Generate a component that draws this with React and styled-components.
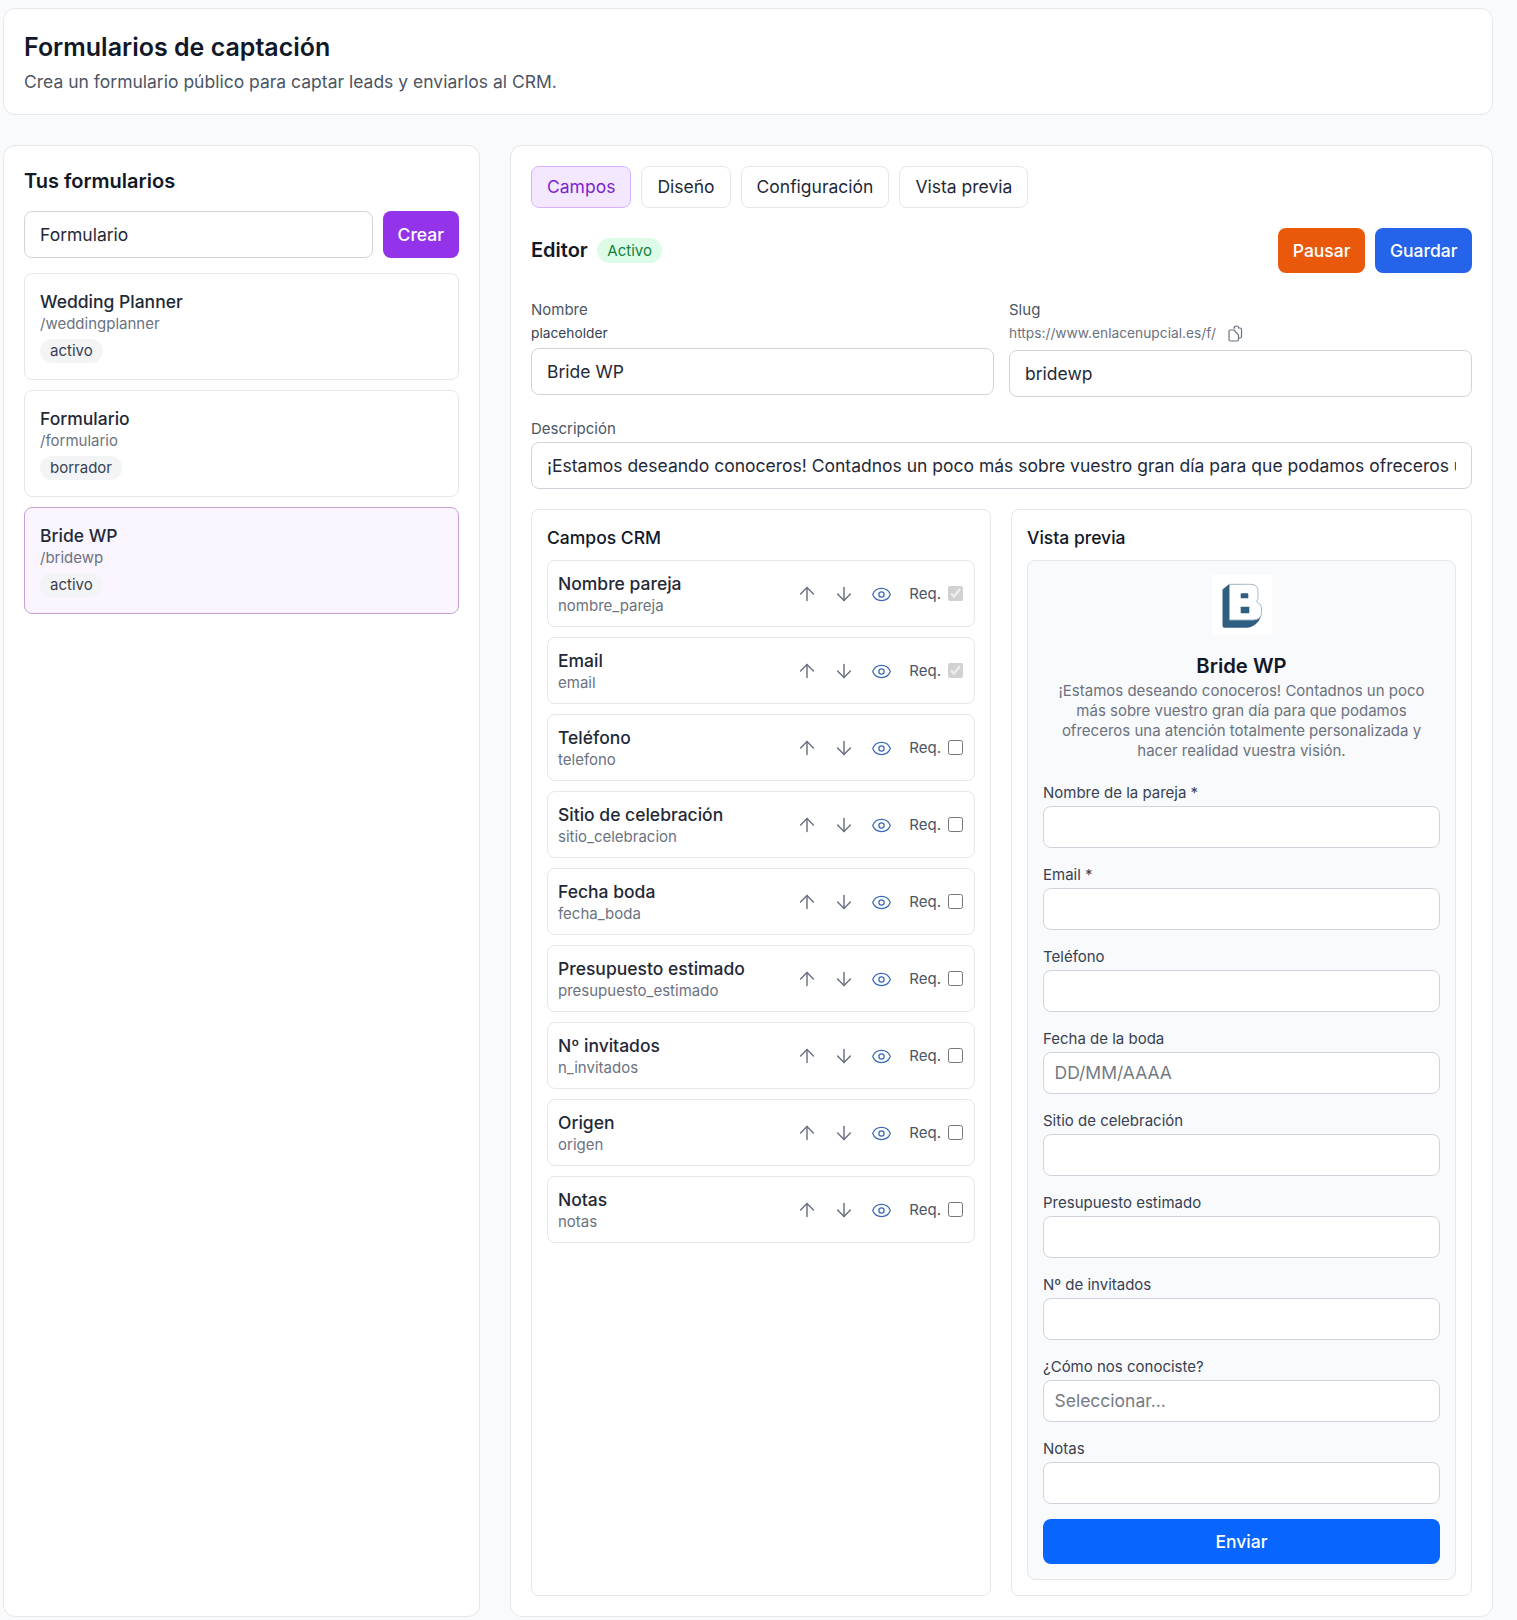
import styled, { createGlobalStyle } from "styled-components";
import { ArrowDown, ArrowUp, Eye } from "lucide-react";

const GlobalStyle = createGlobalStyle`
    * {
        box-sizing: border-box;
    }
    body {
        margin: 0;
        background: #f9fafb;
        color: #111827;
        font-family: Inter, "Liberation Sans", sans-serif;
    }
`;

const Page = styled.div`
    width: 1517px;
    height: 1620px;
    padding: 8px 24px 3px 3px;
    display: flex;
    flex-direction: column;
    gap: 30px;
`;

const Card = styled.section`
    background: #fff;
    border: 1px solid #e5e7eb;
    border-radius: 12px;
`;

const Header = styled(Card)`
    height: 107px;
    padding: 24px 20px 0;
`;

const PageTitle = styled.h1`
    margin: 0;
    font-size: 25px;
    line-height: 28px;
    font-weight: 600;
`;

const PageSub = styled.p`
    margin: 9px 0 0;
    font-size: 17.5px;
    line-height: 24px;
    color: #4b5563;
`;

const Columns = styled.div`
    flex: 1;
    display: grid;
    grid-template-columns: 477px 983px;
    gap: 30px;
    min-height: 0;
`;

const Sidebar = styled(Card)`
    padding: 20px;
`;

const SideTitle = styled.h2`
    margin: 0 0 15px;
    font-size: 20px;
    line-height: 30px;
    font-weight: 600;
`;

const CreateRow = styled.div`
    display: flex;
    gap: 10px;
    margin-bottom: 15px;
`;

const TextInput = styled.input`
    display: block;
    width: 100%;
    min-width: 0;
    height: ${(p) => p.$h || 47}px;
    padding: 0 ${(p) => p.$pad || 15}px;
    background: #fff;
    border: 1px solid #d1d5db;
    border-radius: 8px;
    color: #1f2937;
    font-family: inherit;
    font-size: 17.5px;
    outline: none;

    &::placeholder {
        color: #757b85;
    }
`;

const Button = styled.button`
    flex: none;
    height: ${(p) => p.$h || 45}px;
    padding: 0 ${(p) => p.$px || 14.5}px;
    border: 0;
    border-radius: 8px;
    background: ${(p) => p.$bg};
    color: #fff;
    font-family: inherit;
    font-size: 17.5px;
    font-weight: 500;
`;

const FormList = styled.div`
    display: flex;
    flex-direction: column;
    gap: 10px;
`;

const FormItem = styled.div`
    height: 107px;
    padding: 16px 15px 0;
    border: 1px solid ${(p) => (p.$active ? "#c79fd8" : "#e5e7eb")};
    border-radius: 8px;
    background: ${(p) => (p.$active ? "#faf5ff" : "#fff")};
`;

const FormName = styled.div`
    font-size: 17.5px;
    line-height: 24px;
    font-weight: 500;
    color: #1f2937;
`;

const FormSlug = styled.div`
    font-size: 15px;
    line-height: 20px;
    color: #6b7280;
`;

const Chip = styled.span`
    display: inline-block;
    margin-top: 5px;
    padding: 0 10px;
    height: 24px;
    line-height: 24px;
    border-radius: 12px;
    background: #f3f4f6;
    color: #374151;
    font-size: 15px;
`;

const Editor = styled(Card)`
    padding: 20px;
    display: flex;
    flex-direction: column;
`;

const Tabs = styled.div`
    display: flex;
    gap: 10px;
`;

const Tab = styled.button`
    height: 42px;
    padding: 0 15px 1px;
    border: 1px solid ${(p) => (p.$active ? "#d8b4fe" : "#e5e7eb")};
    border-radius: 8px;
    background: ${(p) => (p.$active ? "#f3e8ff" : "#fff")};
    color: ${(p) => (p.$active ? "#7e22ce" : "#1f2937")};
    font-family: inherit;
    font-size: 17.5px;
`;

const EditorBar = styled.div`
    display: flex;
    align-items: flex-start;
    justify-content: space-between;
    margin-top: 20px;
    height: 45px;
`;

const EditorName = styled.div`
    display: flex;
    align-items: center;
    gap: 9.5px;
    height: 44px;
`;

const EditorTitle = styled.h2`
    margin: 0;
    font-size: 20px;
    font-weight: 600;
`;

const StatusBadge = styled.span`
    height: 25px;
    line-height: 25px;
    padding: 0 10px;
    border-radius: 13px;
    background: #dcfce7;
    color: #15803d;
    font-size: 15px;
`;

const Actions = styled.div`
    display: flex;
    gap: 10px;
`;

const NameGrid = styled.div`
    display: grid;
    grid-template-columns: 463px 463px;
    gap: 15px;
    margin-top: 26px;
`;

const FieldLabel = styled.div`
    font-size: 15px;
    line-height: ${(p) => p.$lh || 22}px;
    color: #4b5563;
`;

const SubLabel = styled.div`
    display: flex;
    align-items: flex-start;
    gap: 12px;
    height: ${(p) => p.$h}px;
    font-size: 13.75px;
    line-height: 24px;
    color: ${(p) => p.$color};
`;

const CopyIcon = styled.svg`
    margin-top: 4px;
    color: #6b7280;
`;

const DescField = styled.div`
    margin-top: 19px;
`;

const Panels = styled.div`
    flex: 1;
    display: grid;
    grid-template-columns: 460px 461px;
    gap: 20px;
    margin-top: 20px;
`;

const Panel = styled.div`
    border: 1px solid #e5e7eb;
    border-radius: 8px;
    padding: 15px;
    display: flex;
    flex-direction: column;
`;

const PanelTitle = styled.h3`
    margin: 0 0 10px;
    height: 25px;
    font-size: 17.5px;
    line-height: 25px;
    font-weight: 500;
`;

const FieldList = styled.div`
    display: flex;
    flex-direction: column;
    gap: 10.3px;
`;

const FieldRow = styled.div`
    height: 66.7px;
    padding: 2px 11px 0 10px;
    display: flex;
    align-items: center;
    justify-content: space-between;
    border: 1px solid #e5e7eb;
    border-radius: 8px;
`;

const FieldName = styled.div`
    font-size: 17.5px;
    line-height: 24px;
    font-weight: 500;
    color: #1f2937;
`;

const FieldKey = styled.div`
    font-size: 15px;
    line-height: 20px;
    color: #6b7280;
`;

const RowTools = styled.div`
    display: flex;
    align-items: center;
    height: 22px;
`;

const IconSlot = styled.span`
    display: flex;
    justify-content: center;
    width: 37.5px;
    color: ${(p) => p.$color || "#6b7280"};
`;

const ReqLabel = styled.label`
    display: flex;
    align-items: center;
    gap: 7px;
    margin: -2px 0 0 9px;
    font-size: 15px;
    color: #4b5563;
`;

const ReqBox = styled.input`
    width: 15px;
    height: 15px;
    margin: 0;
`;

const PreviewBox = styled.div`
    flex: 1;
    padding: 14px 15px;
    border: 1px solid #e5e7eb;
    border-radius: 8px;
    background: #f9fafb;
`;

const LogoBox = styled.div`
    width: 60px;
    height: 60px;
    margin: 0 auto;
    background: #fff;
`;

const PreviewTitle = styled.h4`
    margin: 16px 0 0;
    text-align: center;
    font-size: 20.25px;
    line-height: 30px;
    font-weight: 600;
`;

const PreviewText = styled.p`
    margin: 0 auto 18px;
    width: 375px;
    text-align: center;
    font-size: 15px;
    line-height: 20px;
    color: #6b7280;
`;

const PreviewField = styled.div`
    margin-bottom: 13.5px;
`;

const PreviewLabel = styled.div`
    font-size: 15px;
    line-height: 27px;
    color: #374151;
`;

const SendButton = styled(Button)`
    display: block;
    width: 100%;
    margin-top: 15px;
`;

const forms = [
    { name: "Wedding Planner", slug: "/weddingplanner", status: "activo" },
    { name: "Formulario", slug: "/formulario", status: "borrador" },
    { name: "Bride WP", slug: "/bridewp", status: "activo", active: true },
];

const tabs = ["Campos", "Diseño", "Configuración", "Vista previa"];

const crmFields = [
    { name: "Nombre pareja", key: "nombre_pareja", locked: true },
    { name: "Email", key: "email", locked: true },
    { name: "Teléfono", key: "telefono" },
    { name: "Sitio de celebración", key: "sitio_celebracion" },
    { name: "Fecha boda", key: "fecha_boda" },
    { name: "Presupuesto estimado", key: "presupuesto_estimado" },
    { name: "Nº invitados", key: "n_invitados" },
    { name: "Origen", key: "origen" },
    { name: "Notas", key: "notas" },
];

const previewFields = [
    { label: "Nombre de la pareja *" },
    { label: "Email *" },
    { label: "Teléfono" },
    { label: "Fecha de la boda", placeholder: "DD/MM/AAAA" },
    { label: "Sitio de celebración" },
    { label: "Presupuesto estimado" },
    { label: "Nº de invitados" },
    { label: "¿Cómo nos conociste?", placeholder: "Seleccionar..." },
    { label: "Notas" },
];

const description =
    "¡Estamos deseando conoceros! Contadnos un poco más sobre vuestro gran día para que podamos ofreceros una atención totalmente personalizada y hacer realidad vuestra visión.";

function BrideLogo() {
    return (
        <svg width="60" height="60" viewBox="0 0 60 60">
            <path
                d="M10.5 14.5 L17 9.3 H30 V44 H41 Q46 44 49.5 39 Q48 47 41 51 Q38 52.7 35 52.7 H12.5 Q10.5 52.7 10.5 50.5 Z"
                fill="#2f5f80"
            />
            <path
                d="M17.5 9.3 H39 Q46 9.3 46 17 V22 Q46 25 44.5 26.5 Q49.5 29 49.5 33 V37 Q49.5 45 41 45 H17.5 Z"
                fill="#fff"
                stroke="#9fb2c0"
                strokeWidth="0.9"
            />
            <rect x="28.7" y="18.3" width="7.6" height="5" rx="0.6" fill="#2f5f80" />
            <rect x="28.7" y="31.7" width="8.6" height="6.6" rx="0.6" fill="#2f5f80" />
        </svg>
    );
}

function SlugCopy() {
    return (
        <CopyIcon width="15" height="17" viewBox="0 0 15 17" fill="none" stroke="currentColor" strokeWidth="1.2">
            <path d="M5 3 H6.5 V2 Q6.5 1 8.5 1 Q10.5 1 10.5 2 V3 H12 Q13.5 3 13.5 4.5 V11.5 Q13.5 13 12 13 H10.5" />
            <path d="M1 6.5 Q1 5 2.5 5 H6 L10.5 10 V14.5 Q10.5 16 9 16 H2.5 Q1 16 1 14.5 Z" />
        </CopyIcon>
    );
}

export default function App() {
    return (
        <Page>
            <GlobalStyle />
            <Header>
                <PageTitle>Formularios de captación</PageTitle>
                <PageSub>Crea un formulario público para captar leads y enviarlos al CRM.</PageSub>
            </Header>

            <Columns>
                <Sidebar>
                    <SideTitle>Tus formularios</SideTitle>
                    <CreateRow>
                        <TextInput defaultValue="Formulario" />
                        <Button $bg="#9333ea" $h={47} $px={15}>
                            Crear
                        </Button>
                    </CreateRow>
                    <FormList>
                        {forms.map((form) => (
                            <FormItem key={form.slug} $active={form.active}>
                                <FormName>{form.name}</FormName>
                                <FormSlug>{form.slug}</FormSlug>
                                <Chip>{form.status}</Chip>
                            </FormItem>
                        ))}
                    </FormList>
                </Sidebar>

                <Editor>
                    <Tabs>
                        {tabs.map((tab, index) => (
                            <Tab key={tab} $active={index === 0}>
                                {tab}
                            </Tab>
                        ))}
                    </Tabs>

                    <EditorBar>
                        <EditorName>
                            <EditorTitle>Editor</EditorTitle>
                            <StatusBadge>Activo</StatusBadge>
                        </EditorName>
                        <Actions>
                            <Button $bg="#ea580c" $px={15}>
                                Pausar
                            </Button>
                            <Button $bg="#2563eb">Guardar</Button>
                        </Actions>
                    </EditorBar>

                    <NameGrid>
                        <div>
                            <FieldLabel>Nombre</FieldLabel>
                            <SubLabel $h={27} $color="#374151">
                                placeholder
                            </SubLabel>
                            <TextInput defaultValue="Bride WP" />
                        </div>
                        <div>
                            <FieldLabel>Slug</FieldLabel>
                            <SubLabel $h={29} $color="#6b7280">
                                https://www.enlacenupcial.es/f/
                                <SlugCopy />
                            </SubLabel>
                            <TextInput defaultValue="bridewp" />
                        </div>
                    </NameGrid>

                    <DescField>
                        <FieldLabel $lh={26}>Descripción</FieldLabel>
                        <TextInput defaultValue={description} />
                    </DescField>

                    <Panels>
                        <Panel>
                            <PanelTitle>Campos CRM</PanelTitle>
                            <FieldList>
                                {crmFields.map((field) => (
                                    <FieldRow key={field.key}>
                                        <div>
                                            <FieldName>{field.name}</FieldName>
                                            <FieldKey>{field.key}</FieldKey>
                                        </div>
                                        <RowTools>
                                            <IconSlot>
                                                <ArrowUp size={22} strokeWidth={1.6} />
                                            </IconSlot>
                                            <IconSlot>
                                                <ArrowDown size={22} strokeWidth={1.6} />
                                            </IconSlot>
                                            <IconSlot $color="#3868b8">
                                                <Eye size={21} strokeWidth={1.4} />
                                            </IconSlot>
                                            <ReqLabel>
                                                Req.
                                                <ReqBox
                                                    type="checkbox"
                                                    checked={!!field.locked}
                                                    disabled={!!field.locked}
                                                    readOnly
                                                />
                                            </ReqLabel>
                                        </RowTools>
                                    </FieldRow>
                                ))}
                            </FieldList>
                        </Panel>

                        <Panel>
                            <PanelTitle>Vista previa</PanelTitle>
                            <PreviewBox>
                                <LogoBox>
                                    <BrideLogo />
                                </LogoBox>
                                <PreviewTitle>Bride WP</PreviewTitle>
                                <PreviewText>{description}</PreviewText>
                                {previewFields.map((field) => (
                                    <PreviewField key={field.label}>
                                        <PreviewLabel>{field.label}</PreviewLabel>
                                        <TextInput $h={41.5} $pad={10.5} placeholder={field.placeholder} />
                                    </PreviewField>
                                ))}
                                <SendButton $bg="#0866ff">Enviar</SendButton>
                            </PreviewBox>
                        </Panel>
                    </Panels>
                </Editor>
            </Columns>
        </Page>
    );
}
